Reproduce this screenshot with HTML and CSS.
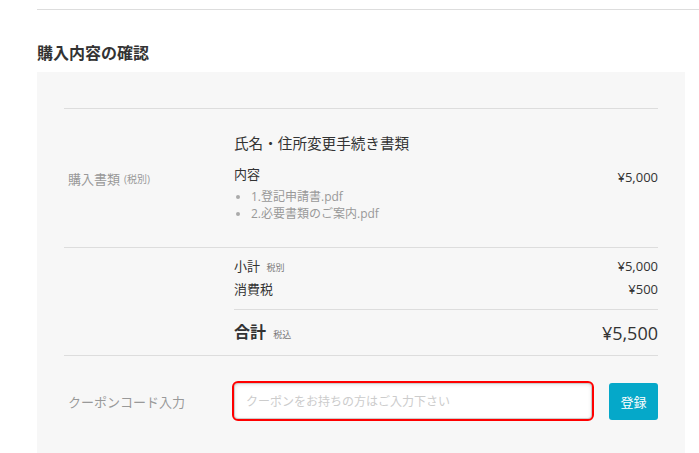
FILE: index.html
```html
<!DOCTYPE html>
<html lang="ja">
<head>
  <meta charset="UTF-8" />
  <title>購入内容の確認</title>
  <link rel="stylesheet" href="styles.css">
</head>
<body>
  <div class="page">
    <hr class="top-rule">
    <h2 class="heading">購入内容の確認</h2>

    <div class="box">
      <!-- 購入書類 -->
      <div class="row">
        <div class="label">購入書類 <small>(税別)</small></div>
        <div class="detail">
          <div class="doc-title">氏名・住所変更手続き書類</div>
          <div class="line-item">
            <div>
              <div class="sub">内容</div>
              <ul class="files">
                <li>1.登記申請書.pdf</li>
                <li>2.必要書類のご案内.pdf</li>
              </ul>
            </div>
            <div class="price">¥5,000</div>
          </div>
        </div>
      </div>

      <!-- 合計 -->
      <div class="row">
        <div class="label"></div>
        <div class="detail totals">
          <div class="sum-line"><span>小計 <small>税別</small></span><span>¥5,000</span></div>
          <div class="sum-line"><span>消費税</span><span>¥500</span></div>
          <div class="grand"><span><b>合計</b> <small>税込</small></span><span class="grand-price">¥5,500</span></div>
        </div>
      </div>

      <!-- クーポン -->
      <div class="row coupon">
        <div class="label">クーポンコード入力</div>
        <div class="coupon-form">
          <input type="text" class="coupon-input" placeholder="クーポンをお持ちの方はご入力下さい">
          <button class="btn">登録</button>
        </div>
      </div>
    </div>
  </div>
</body>
</html>
```

FILE: styles.css
```css
body { margin: 0; font-family: "Open Sans", "Noto Sans CJK JP", sans-serif; color: #333; background: #fff; }
.page { padding-left: 37px; }
.top-rule { margin: 9px 0 0; border: none; border-top: 1px solid #ddd; }
.heading { margin: 31px 0 0; height: 24px; font-size: 16px; font-weight: bold; line-height: 24px; color: #333; }
.box { margin: 7px 14px 0 0; background: #f7f7f7; padding: 36px 27px 40px; }
.row { display: grid; grid-template-columns: 170px 1fr; border-top: 1px solid #ddd; }
.label { font-size: 13px; color: #999; display: flex; align-items: center; padding-left: 4px; }
.label small { font-size: 10px; margin-left: 4px; }
.detail { padding: 22px 0 25px; }
.doc-title { height: 24px; font-size: 14.6px; line-height: 24px; color: #333; }
.line-item { display: flex; justify-content: space-between; align-items: flex-start; margin-top: 9px; }
.sub { height: 20px; font-size: 13px; line-height: 20px; }
.price { height: 20px; font-size: 13px; line-height: 20px; color: #333; margin-top: 3px; }
.files { margin: 4px 0 0; padding: 0; list-style: none; font-size: 12px; color: #999; }
.files li { display: flex; align-items: center; height: 17px; line-height: 17px; }
.files li::before { content: ""; width: 4px; height: 4px; margin: 0 11px 0 2px; border-radius: 50%; background: #aaa; }
.totals { padding: 7px 0 7px; }
.sum-line { display: flex; justify-content: space-between; height: 23px; font-size: 13px; line-height: 23px; }
.sum-line small { font-size: 9px; color: #777; margin-left: 3px; }
.grand { display: flex; justify-content: space-between; align-items: center; height: 30px; border-top: 1px solid #ddd; margin-top: 8px; padding-top: 8px; line-height: 30px; }
.grand b { font-size: 16px; }
.grand small { font-size: 9px; color: #777; margin-left: 3px; }
.grand-price { font-size: 18px; color: #333; }
.coupon-form { display: flex; align-items: center; gap: 15px; padding-top: 25px; }
.coupon .label { padding-top: 26px; }
.coupon-input { flex: 1; box-sizing: border-box; height: 40px; margin-left: -2px; padding: 0 12px; font-family: inherit; font-size: 12px; color: #333; background: #fff; border: 2px solid #f00; border-radius: 6px; box-shadow: inset 0 0 0 1px #ccc, inset 0 1px 4px rgba(0, 0, 0, 0.15); outline: none; }
.coupon-input::placeholder { color: #ccc; }
.btn { width: 49px; height: 37px; font-family: inherit; font-size: 13px; color: #fff; background: #05a8c9; border: none; border-radius: 3px; }
```
